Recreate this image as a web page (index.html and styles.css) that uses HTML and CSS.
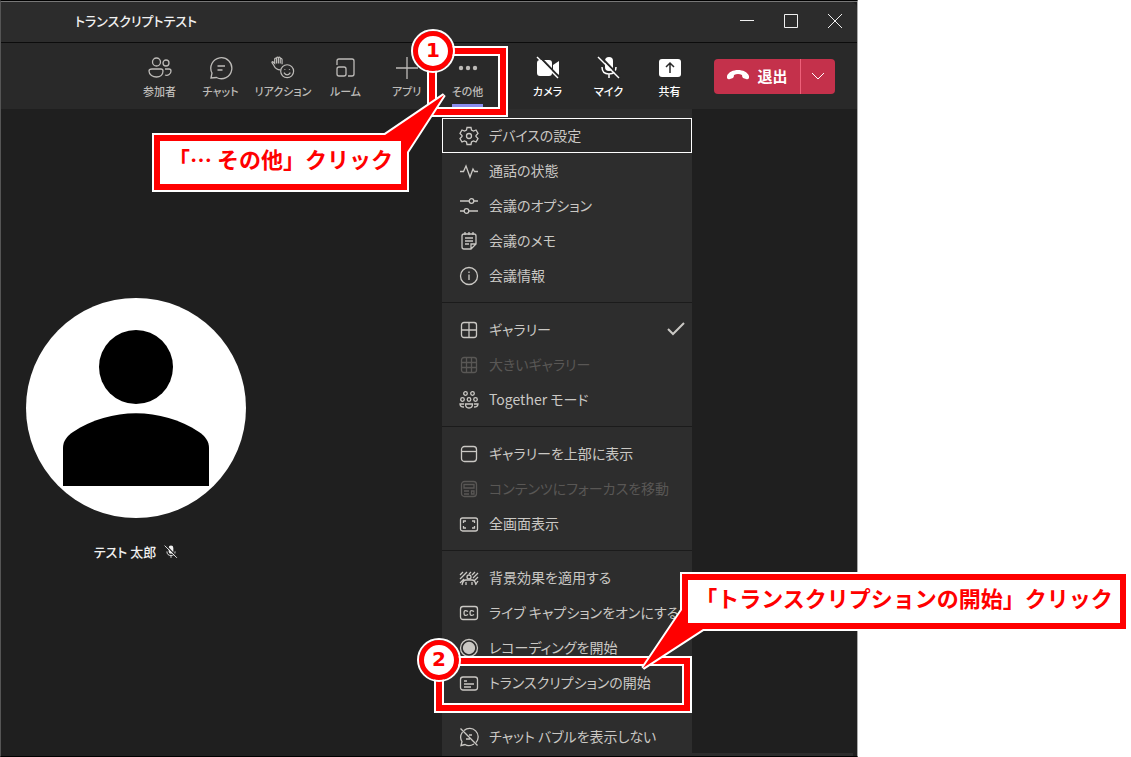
FILE: index.html
```html
<!DOCTYPE html>
<html lang="ja">
<head>
<meta charset="utf-8">
<title>トランスクリプトテスト</title>
<link rel="stylesheet" href="styles.css">
</head>
<body>
<main class="stage">
  <section class="window">
    <header class="titlebar">
      <h1 class="title">トランスクリプトテスト</h1>
      <div class="controls">
        <button class="control" aria-label="最小化"><svg width="14" height="14" viewBox="0 0 14 14"><path d="M0 6.500H14"/></svg></button>
        <button class="control" aria-label="最大化"><svg width="14" height="14" viewBox="0 0 14 14"><path d="M.5 .5H13.500V13.500H.5Z"/></svg></button>
        <button class="control" aria-label="閉じる"><svg width="14" height="14" viewBox="0 0 14 14"><path d="M0 0L14 14M14 0L0 14"/></svg></button>
      </div>
    </header>
    <nav class="toolbar">
      <div class="tools">
        <button class="tool"><svg class="icon" width="24" height="24" viewBox="0 0 24 24"><circle cx="8.500" cy="6" r="4"/><circle cx="18" cy="7" r="3"/><path d="M4 13H13Q15 13 15 15C15 19 12 21 8.500 21S1 19 1 15Q1 13 4 13ZM17 13H21Q23 13 23 15C23 18 20 20 17 19"/></svg><span>参加者</span></button>
        <button class="tool"><svg class="icon" width="24" height="24" viewBox="0 0 24 24"><path d="M2 22L3 17A10.500 10.500 0 1 1 7.500 21.500ZM8.500 10H16M8.500 14H13.500"/></svg><span>チャット</span></button>
        <button class="tool tool-wide"><svg class="icon" width="26" height="26" viewBox="0 0 26 26"><path d="M10 15C5 15 4 12 3 10L1 7Q1 5 3 7L4 8V3Q5 1.500 6 3V2Q7 .5 8 2Q9 .5 10 2V3Q11.500 2 12 4V9M6 3V8M8 2V8M10 3V8"/><circle cx="17.500" cy="16.500" r="7"/><path d="M14 18Q17.500 23 21 18M15 14V15M20 14V15"/></svg><span>リアクション</span></button>
        <button class="tool"><svg class="icon" width="24" height="24" viewBox="0 0 24 24"><path d="M3 9V5Q3 3 5 3H18Q20 3 20 5V18Q20 20 18 20H14"/><rect x="3" y="11" width="9" height="9" rx="2"/></svg><span>ルーム</span></button>
        <button class="tool"><svg class="icon" width="24" height="24" viewBox="0 0 24 24"><path d="M12 1V23M1 12H23"/></svg><span>アプリ</span></button>
        <button class="tool tool-active" aria-expanded="true"><svg class="icon solid" width="24" height="24" viewBox="0 0 24 24"><circle cx="5" cy="12" r="2.200"/><circle cx="12" cy="12" r="2.200"/><circle cx="19" cy="12" r="2.200"/></svg><span>その他</span></button>
      </div>
      <div class="tools tools-bright">
        <button class="tool"><svg class="icon solid" width="24" height="24" viewBox="0 0 24 24"><path d="M4 4H13Q16 4 16 7V17Q16 20 13 20H4Q1 20 1 17V7Q1 4 4 4ZM17 9L23 5V19L17 15Z"/><path class="slash-gap" d="M3 0L25 23"/><path class="slash" d="M1 1L22 22"/></svg><span>カメラ</span></button>
        <button class="tool"><svg class="icon solid" width="24" height="24" viewBox="0 0 24 24"><rect x="8" y="1" width="8" height="14" rx="4"/><path class="line" d="M5 11Q5 18 12 18T19 11M12 18V22"/><path class="slash-gap" d="M3 0L25 23"/><path class="slash" d="M1 1L22 22"/></svg><span>マイク</span></button>
        <button class="tool"><svg class="icon solid" width="24" height="24" viewBox="0 0 24 24"><rect x="1" y="3" width="22" height="18" rx="3"/><path class="arrow" d="M12 17V7M8 11L12 7L16 11"/></svg><span>共有</span></button>
      </div>
      <div class="leave">
        <button class="leave-main"><svg width="24" height="12" viewBox="0 0 24 12"><path fill="currentColor" d="M1 7C4-1 20-1 23 7V9Q22 11 20 10L17 9Q16 8 16 6Q12 4 8 6Q8 8 7 9L4 10Q2 11 1 9Z"/></svg>退出</button>
        <button class="leave-more" aria-label="退出オプション"><svg width="14" height="8" viewBox="0 0 14 8"><path d="M1 1L7 7L13 1"/></svg></button>
      </div>
    </nav>
    <div class="meeting">
      <figure class="participant">
        <svg class="avatar" width="220" height="220" viewBox="0 0 220 220" role="img" aria-label="テスト 太郎"><circle cx="110" cy="110" r="110" fill="#fff"/><circle cx="110" cy="69" r="37"/><path d="M37 188V150C37 143 41 138 47 134C85 109 135 109 173 134C179 138 183 143 183 150V188Z"/></svg>
        <figcaption class="name">テスト 太郎<svg class="icon solid" width="14" height="14" viewBox="0 0 24 24"><rect x="8" y="1" width="8" height="14" rx="4"/><path class="line" d="M5 11Q5 18 12 18T19 11M12 18V22"/><path class="slash-gap" d="M3 0L25 23"/><path class="slash" d="M1 1L22 22"/></svg></figcaption>
      </figure>
    </div>
    <div class="tray"></div>
  </section>

  <div class="menu" role="menu">
    <button class="item item-focus" role="menuitem"><svg class="icon" width="20" height="20" viewBox="0 0 20 20"><path d="M8 1.500H12L12.500 4L14.500 5L17 4L19 7.500L17 9.500V10.500L19 12.500L17 16L14.500 15L12.500 16L12 18.500H8L7.500 16L5.500 15L3 16L1 12.500L3 10.500V9.500L1 7.500L3 4L5.500 5L7.500 4Z"/><circle cx="10" cy="10" r="2.500"/></svg>デバイスの設定</button>
    <button class="item" role="menuitem"><svg class="icon" width="20" height="20" viewBox="0 0 20 20"><path d="M1 10.500H4.500L7 5L11 16L14 8L15.500 10.500H19"/></svg>通話の状態</button>
    <button class="item" role="menuitem"><svg class="icon" width="20" height="20" viewBox="0 0 20 20"><path d="M1 5H10M15 5H19M1 15H5M10 15H19"/><circle cx="12.500" cy="5" r="2.300"/><circle cx="7.500" cy="15" r="2.300"/></svg>会議のオプション</button>
    <button class="item" role="menuitem"><svg class="icon" width="20" height="20" viewBox="0 0 20 20"><path d="M5 3H15Q17 3 17 5V13L12 18H5Q3 18 3 16V5Q3 3 5 3ZM17 13H12V18M6 1V4M10 1V4M14 1V4M6 7H14M6 10H14M6 13H10"/></svg>会議のメモ</button>
    <button class="item" role="menuitem"><svg class="icon" width="20" height="20" viewBox="0 0 20 20"><circle cx="10" cy="10" r="8.500"/><path d="M10 8.500V14M10 5.500V7"/></svg>会議情報</button>
    <hr class="rule">
    <button class="item" role="menuitemradio" aria-checked="true"><svg class="icon" width="20" height="20" viewBox="0 0 20 20"><rect x="2.500" y="2.500" width="15" height="15" rx="2.500"/><path d="M10 3V17M3 10H17"/></svg>ギャラリー<svg class="check" width="18" height="14" viewBox="0 0 18 14"><path d="M1 7L6 12L17 1"/></svg></button>
    <button class="item" role="menuitem" disabled><svg class="icon" width="20" height="20" viewBox="0 0 20 20"><rect x="2.500" y="2.500" width="15" height="15" rx="2.500"/><path d="M7.500 3V17M12.500 3V17M3 7.500H17M3 12.500H17"/></svg>大きいギャラリー</button>
    <button class="item" role="menuitem"><svg class="icon" width="20" height="20" viewBox="0 0 20 20"><circle cx="6.500" cy="3.500" r="1.800"/><circle cx="13.500" cy="3.500" r="1.800"/><circle cx="3.500" cy="9.500" r="1.800"/><circle cx="10" cy="9.500" r="1.800"/><circle cx="16.500" cy="9.500" r="1.800"/><path d="M6.500 14H13.500Q13.500 18 10 18T6.500 14ZM5 14H1Q1 17 5 17M15 14H19Q19 17 15 17"/></svg>Together モード</button>
    <hr class="rule">
    <button class="item" role="menuitem"><svg class="icon" width="20" height="20" viewBox="0 0 20 20"><rect x="2.500" y="2.500" width="15" height="15" rx="3"/><path d="M3 7.500H17"/></svg>ギャラリーを上部に表示</button>
    <button class="item" role="menuitem" disabled><svg class="icon" width="20" height="20" viewBox="0 0 20 20"><rect x="2.500" y="2.500" width="15" height="15" rx="3"/><path d="M5 5.500H15V9H5ZM5 12H10M5 15H10M12.500 12H15V15H12.500Z"/></svg>コンテンツにフォーカスを移動</button>
    <button class="item" role="menuitem"><svg class="icon" width="20" height="20" viewBox="0 0 20 20"><rect x="1.500" y="4" width="17" height="13" rx="2"/><path d="M4.500 9V7H7M13 7H15.500V9M15.500 12V14H13M7 14H4.500V12"/></svg>全画面表示</button>
    <hr class="rule">
    <button class="item" role="menuitem"><svg class="icon" width="20" height="20" viewBox="0 0 20 20"><path d="M1 7L4 4M1 11L8 4M1 15L5 11M12 4L10 6M16 4L13 7M19 5L14 10M19 9L15 13M19 13L17 16M3 17Q4 12 7 12H13Q16 12 17 17M7 14V17M13 14V17"/><circle cx="10" cy="9" r="2"/></svg>背景効果を適用する</button>
    <button class="item" role="menuitem"><svg class="icon" width="20" height="20" viewBox="0 0 20 20"><rect x="1.500" y="3.500" width="17" height="13" rx="2.500"/><path d="M9 8.500Q5 6 5 10T9 11.500M15 8.500Q11 6 11 10T15 11.500"/></svg>ライブ キャプションをオンにする</button>
    <button class="item" role="menuitem"><svg class="icon" width="20" height="20" viewBox="0 0 20 20"><circle cx="10" cy="10" r="8.500"/><circle cx="10" cy="10" r="5.500" fill="currentColor"/></svg>レコーディングを開始</button>
    <button class="item" role="menuitem"><svg class="icon" width="20" height="20" viewBox="0 0 20 20"><rect x="1.500" y="4" width="17" height="13" rx="2.500"/><path d="M5 8H8M5 11H15M5 14H12"/></svg>トランスクリプションの開始</button>
    <hr class="rule">
    <button class="item" role="menuitem"><svg class="icon" width="20" height="20" viewBox="0 0 20 20"><path d="M5 3.500A8.500 8.500 0 0 1 17 15.500M15 17Q10 20 6 17.500L2 18.500L3 14.500Q0 10 3.500 5M1.500 1.500L18.500 18.500M10 8H13M7 12H11"/></svg>チャット バブルを表示しない</button>
  </div>

  <svg class="marks" width="1131" height="757" viewBox="0 0 1131 757" aria-hidden="true">
    <g class="frame">
      <path class="halo" d="M432 51H503V112H432Z"/><path d="M432 51H503V112H432Z"/>
      <path class="halo" d="M439 661H687V708H439Z"/><path d="M439 661H687V708H439Z"/>
    </g>
    <g class="bubble">
      <path d="M154 135H385L444 95L407 152V190H154Z"/>
      <path d="M682 574H1126V629H703L643 668L682 610Z"/>
    </g>
  </svg>
  <p class="callout callout-more">「… その他」クリック</p>
  <p class="callout callout-transcript">「トランスクリプションの開始」クリック</p>
  <span class="step step-one">1</span>
  <span class="step step-two">2</span>
</main>
</body>
</html>
```
FILE: styles.css
```css
* { box-sizing: border-box; }
body {
  margin: 0;
  background: #fff;
  font-family: "Noto Sans CJK JP", sans-serif;
  font-feature-settings: "palt";
}
button {
  border: 0;
  padding: 0;
  background: none;
  color: inherit;
  font: inherit;
  font-feature-settings: inherit;
}
svg { flex: none; fill: none; stroke: currentColor; }
.stage {
  position: relative;
  display: grid;
  grid-template-columns: 858fr 273fr;
  min-height: 100vh;
  overflow: hidden;
}
.window {
  display: flex;
  flex-direction: column;
  border: 1px solid #000;
  border-left-color: #555;
  border-right-color: #aaa;
  background: #1f1f1f;
  box-shadow: inset 0 1px #777;
}
.titlebar {
  display: flex;
  align-items: center;
  justify-content: space-between;
  height: 41px;
  margin-top: 1px;
  padding: 0 15px 2px 74px;
  border-bottom: 1px solid #0c0c0c;
  border-top-right-radius: 6px;
  background: #2c2c2c;
  color: #f0f0f0;
}
.title { margin: 0; font-size: 13px; font-weight: 500; line-height: 20px; }
.controls { display: flex; gap: 30px; }
.control { display: flex; }
.toolbar {
  display: flex;
  align-items: center;
  justify-content: flex-end;
  height: 66px;
  padding-right: 22px;
  background: #292929;
  color: #bdbbb8;
}
.tools { display: flex; height: 100%; margin-right: 19px; }
.tools-bright { margin-right: 14px; color: #fff; }
.tool {
  display: flex;
  flex-direction: column;
  align-items: center;
  width: 61px;
  padding-top: 13px;
  font-size: 11px;
  font-weight: 500;
  line-height: 16px;
  white-space: nowrap;
}
.tool .icon { height: 24px; margin-bottom: 3px; }
.tool-wide { width: 64px; }
.tool-active span { padding-bottom: 5px; border-bottom: 3px solid #8b8cf0; }
.icon { stroke-width: 1.3; }
.solid { fill: currentColor; stroke: none; }
.line { fill: none; stroke: currentColor; stroke-width: 1.500; }
.slash { stroke: currentColor; stroke-width: 1.500; }
.slash-gap { stroke: #292929; stroke-width: 2; }
.arrow { fill: none; stroke: #292929; stroke-width: 1.500; }
.leave {
  display: flex;
  width: 121px;
  height: 35px;
  border-radius: 4px;
  background: #c4314b;
  color: #fff;
  overflow: hidden;
}
.leave-main {
  display: flex;
  flex: 1;
  align-items: center;
  justify-content: center;
  gap: 7px;
  padding-bottom: 2px;
  font-size: 15px;
  font-weight: 700;
}
.leave-main svg { stroke: none; }
.leave-more {
  display: flex;
  align-items: center;
  justify-content: center;
  width: 35px;
  border-left: 1px solid #ee6079;
}
.meeting { flex: 1; padding: 189px 25px 0; }
.participant {
  display: flex;
  flex-direction: column;
  align-items: center;
  width: 220px;
  margin: 0;
}
.avatar { fill: #000; stroke: none; }
.name {
  display: flex;
  align-items: center;
  gap: 8px;
  margin-top: 24px;
  color: #f0f0f0;
  font-size: 13px;
  font-weight: 500;
  line-height: 20px;
}
.tray {
  align-self: flex-end;
  width: 163px;
  height: 3px;
  margin-right: 4px;
  background: #2d2d2d;
}
.menu {
  position: absolute;
  top: 109px;
  bottom: 1px;
  left: 442px;
  width: 250px;
  padding-top: 9px;
  background: #2d2d2d;
  color: #cac8c4;
  overflow: hidden;
}
.item {
  display: flex;
  align-items: center;
  gap: 10px;
  width: 100%;
  height: 35px;
  padding: 0 7px 2px 17px;
  font-size: 14px;
  line-height: 20px;
  text-align: left;
  white-space: nowrap;
}
.item .icon { margin-top: 2px; }
.item:disabled { color: #595755; }
.item-focus { border: 1px solid #fff; padding: 0 6px 2px 16px; background: #292929; }
.check { margin-left: auto; stroke-width: 2; }
.rule { height: 1px; margin: 9px 0; border: 0; background: #1b1b1b; }
.marks { position: absolute; top: 0; left: 0; }
.frame { stroke: #f00; stroke-width: 6; }
.halo { stroke: #fff; stroke-width: 10; }
.bubble { fill: #f00; stroke: #fff; stroke-width: 4; paint-order: stroke; }
.callout {
  position: absolute;
  margin: 0;
  height: 43px;
  background: #fff;
  color: #f00;
  font-size: 22px;
  font-weight: 700;
  font-feature-settings: normal;
  line-height: 34px;
  text-align: center;
  white-space: nowrap;
}
.callout-more { top: 141px; left: 160px; width: 241px; }
.callout-transcript { top: 580px; left: 688px; width: 432px; }
.step {
  position: absolute;
  width: 40px;
  height: 40px;
  border: 5px solid #f00;
  border-radius: 50%;
  outline: 2px solid #fff;
  background: #fff;
  color: #f00;
  font-family: "DejaVu Sans", sans-serif;
  font-size: 20px;
  font-weight: 700;
  line-height: 28px;
  text-align: center;
}
.step-one { top: 31px; left: 413px; }
.step-two { top: 640px; left: 419px; }
```
